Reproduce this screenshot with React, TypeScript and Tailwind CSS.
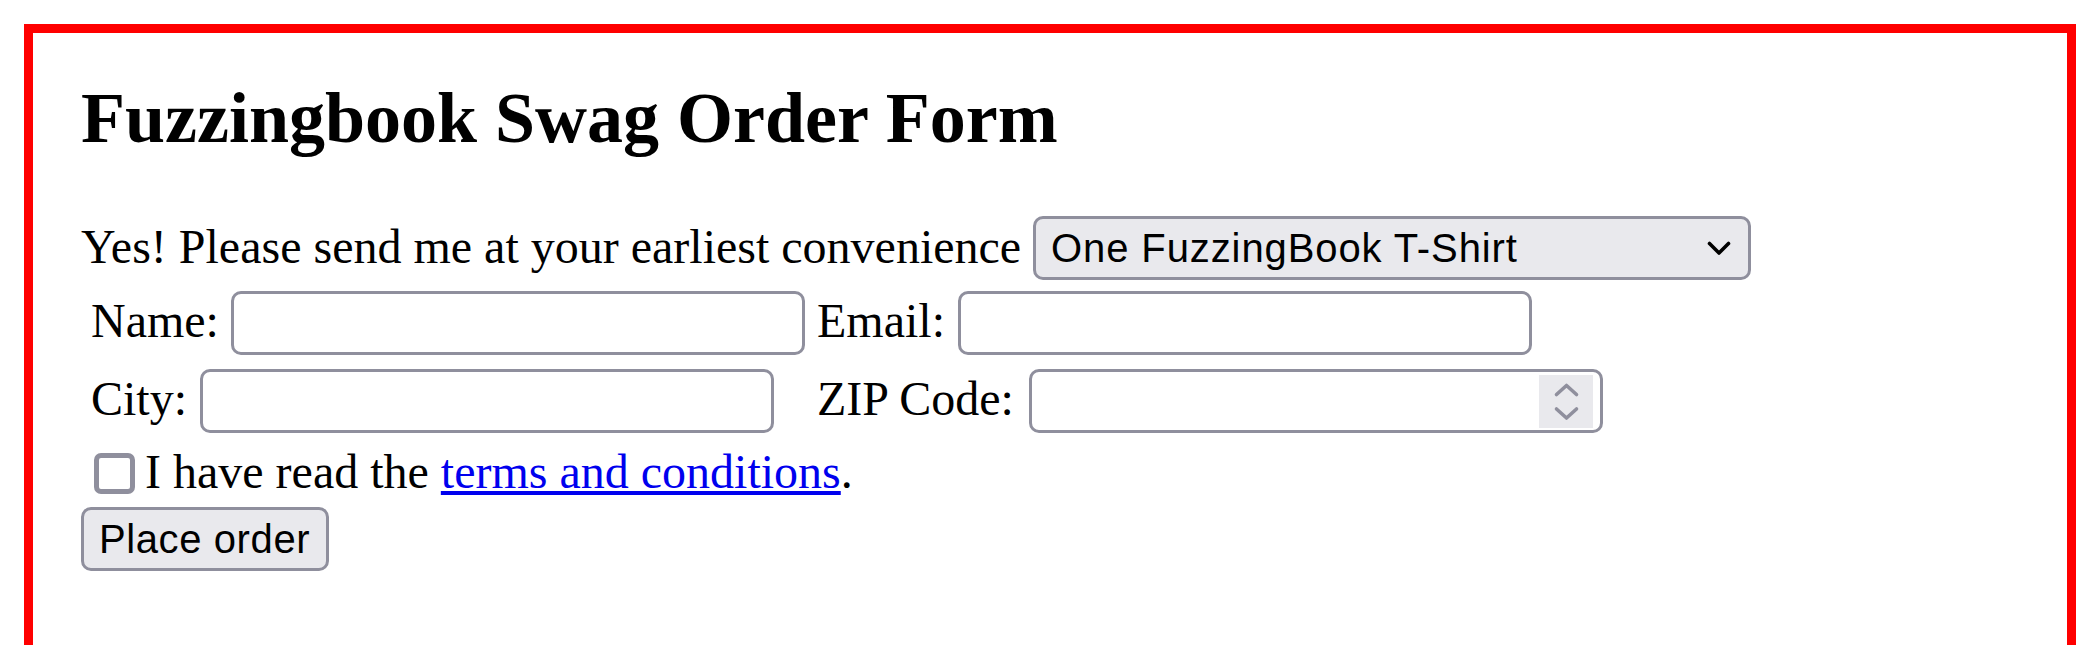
export default function App() {
  return (
    <div className="min-h-[645px] bg-white pt-[24px] px-[24px] font-['Liberation_Serif',serif] text-black">
      <div className="border-[9px] border-[#ff0000] pl-[48px] pt-[45px] pb-[120px]">
        <h2 className="text-[72px] font-bold leading-[80px] h-[80px] whitespace-nowrap">
          Fuzzingbook Swag Order Form
        </h2>

        <div className="mt-[58px] flex items-center h-[64px] text-[48px] leading-[48px]">
          <span className="w-[952px] shrink-0 pb-[2px] whitespace-nowrap">
            Yes! Please send me at your earliest convenience
          </span>
          <div className="w-[718px] h-[64px] shrink-0 flex items-center border-[3px] border-[#8f8f9d] rounded-[10px] bg-[#e9e9ed] pl-[15px] pr-[17px] font-['Liberation_Sans',Arial,sans-serif] text-[40px] leading-[44px]">
            <span className="whitespace-nowrap tracking-[0.9px]">One FuzzingBook T-Shirt</span>
            <svg className="ml-auto" width="24" height="15" viewBox="0 0 24 15" fill="none">
              <polyline points="2.5,2.5 12,12 21.5,2.5" stroke="#000" strokeWidth="3.6" strokeLinecap="round" strokeLinejoin="round" />
            </svg>
          </div>
        </div>

        <div className="mt-[11px] ml-[10px] grid grid-cols-[726px_auto] gap-y-[14px] text-[48px] leading-[48px]">
          <div className="flex items-center h-[64px]">
            <span className="pb-[4px] whitespace-nowrap">Name:</span>
            <input type="text" className="ml-[12px] w-[574px] h-[64px] border-[3px] border-[#8f8f9d] rounded-[10px] bg-white outline-none" />
          </div>
          <div className="flex items-center h-[64px]">
            <span className="pb-[4px] whitespace-nowrap">Email:</span>
            <input type="email" className="ml-[13px] w-[574px] h-[64px] border-[3px] border-[#8f8f9d] rounded-[10px] bg-white outline-none" />
          </div>
          <div className="flex items-center h-[64px]">
            <span className="pb-[4px] whitespace-nowrap">City:</span>
            <input type="text" className="ml-[13px] w-[574px] h-[64px] border-[3px] border-[#8f8f9d] rounded-[10px] bg-white outline-none" />
          </div>
          <div className="flex items-center h-[64px]">
            <span className="pb-[4px] whitespace-nowrap">ZIP Code:</span>
            <div className="ml-[15px] w-[574px] h-[64px] flex items-center border-[3px] border-[#8f8f9d] rounded-[10px] bg-white pr-[7px]">
              <input type="text" className="flex-1 min-w-0 h-full bg-transparent outline-none" />
              <div className="w-[54px] h-[53px] bg-[#e9e9ed]">
                <svg width="54" height="53" viewBox="0 0 54 53" fill="none">
                  <polyline points="17.5,19.5 27.5,10.5 37.5,19.5" stroke="#8f8f9d" strokeWidth="3.6" strokeLinecap="round" strokeLinejoin="round" />
                  <polyline points="17.5,34 27.5,43 37.5,34" stroke="#8f8f9d" strokeWidth="3.6" strokeLinecap="round" strokeLinejoin="round" />
                </svg>
              </div>
            </div>
          </div>
        </div>

        <div className="mt-[20px] ml-[13px] flex items-center h-[40px] text-[48px] leading-[48px]">
          <input type="checkbox" className="appearance-none w-[41px] h-[41px] shrink-0 border-[5px] border-[#8f8f9d] rounded-[7px] bg-white" />
          <span className="ml-[10px] pb-[3px] whitespace-nowrap">
            I have read the{" "}
            <a href="#" className="text-[#0000ee] underline">terms and conditions</a>.
          </span>
        </div>

        <button className="mt-[14px] w-[248px] h-[64px] flex items-center pl-[15px] border-[3px] border-[#8f8f9d] rounded-[10px] bg-[#e9e9ed] font-['Liberation_Sans',Arial,sans-serif] text-[40px] leading-[44px] tracking-[0.6px] text-black whitespace-nowrap">
          Place order
        </button>
      </div>
    </div>
  );
}
